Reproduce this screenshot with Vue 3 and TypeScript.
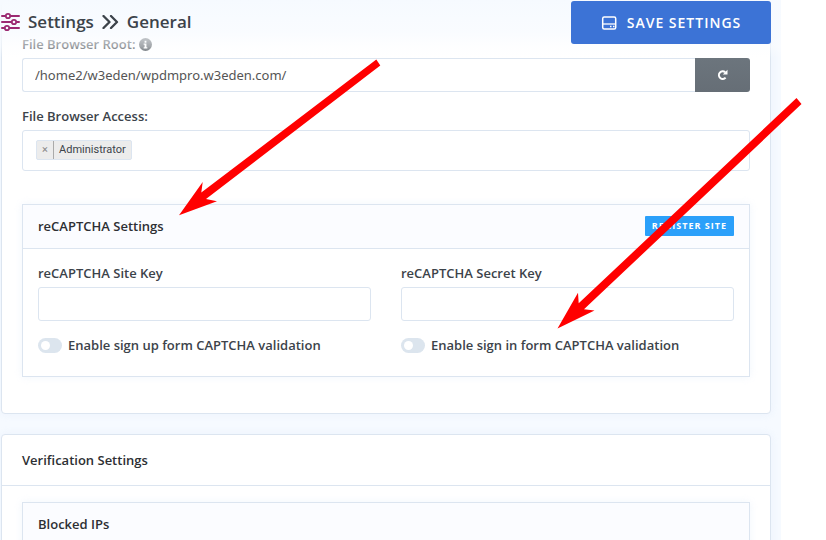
<script setup lang="ts">
import { ref } from 'vue'

const rootPath = ref<string>('/home2/w3eden/wpdmpro.w3eden.com/')
const roles = ref<string[]>(['Administrator'])

interface CaptchaField {
  id: string
  label: string
  value: string
  toggleLabel: string
  enabled: boolean
}

const captchaFields = ref<CaptchaField[]>([
  { id: 'site-key', label: 'reCAPTCHA Site Key', value: '', toggleLabel: 'Enable sign up form CAPTCHA validation', enabled: false },
  { id: 'secret-key', label: 'reCAPTCHA Secret Key', value: '', toggleLabel: 'Enable sign in form CAPTCHA validation', enabled: false },
])

function removeRole(role: string): void {
  roles.value = roles.value.filter((r) => r !== role)
}
</script>

<template>
  <div class="page">
    <header class="topbar">
      <h1 class="title">
        <svg class="sliders" viewBox="0 0 20 20" width="20" height="20" aria-hidden="true">
          <g fill="none" stroke="#9b2a72" stroke-width="2" stroke-linecap="round">
            <path d="M2 4h3M11 4h8M2 10h9M17 10h2M2 16h2M10 16h9" />
            <circle cx="8" cy="4" r="2.200" stroke-width="1.800" />
            <circle cx="14" cy="10" r="2.200" stroke-width="1.800" />
            <circle cx="7" cy="16" r="2.200" stroke-width="1.800" />
          </g>
        </svg>
        <span>Settings</span>
        <svg class="chevrons" viewBox="0 0 17 14" width="17" height="14" aria-hidden="true">
          <path d="M1.500 1l6 6-6 6M9 1l6 6-6 6" fill="none" stroke="#3c434a" stroke-width="2.300" stroke-linecap="round" stroke-linejoin="round" />
        </svg>
        <span>General</span>
      </h1>
      <button type="button" class="save">
        <svg viewBox="0 0 16 14" width="16" height="14" aria-hidden="true">
          <rect x="1.700" y="1" width="13" height="12" rx="1.500" fill="none" stroke="#fff" stroke-width="1.500" />
          <path d="M2 8h13" stroke="#fff" stroke-width="1.300" />
          <path d="M9 10.500h1.500M12 10.500h1.500" stroke="#fff" stroke-width="1.400" />
        </svg>
        Save Settings
      </button>
    </header>

    <main class="content">
      <section class="card files">
        <label class="label" for="root">
          File Browser Root:
          <svg viewBox="0 0 14 14" width="13" height="13" aria-hidden="true">
            <circle cx="7" cy="7" r="7" fill="#495057" />
            <path d="M6 3h2v2H6zM5 6h3v4h1v1.300H5V10h1V7.300H5z" fill="#fff" />
          </svg>
        </label>
        <div class="input-group">
          <input id="root" v-model="rootPath" class="input" type="text" />
          <button type="button" class="reset" aria-label="Reset">
            <svg viewBox="0 0 12 12" width="12" height="12" aria-hidden="true">
              <path d="M8.600 8.600A3.800 3.800 0 1 1 8.200 3.200" fill="none" stroke="#fff" stroke-width="2" />
              <path d="M10.500 .700V5.400H5.800z" fill="#fff" />
            </svg>
          </button>
        </div>

        <label class="label access" for="roles">File Browser Access:</label>
        <div class="chosen">
          <span v-for="role in roles" :key="role" class="chip">
            <button type="button" class="remove" :aria-label="'Remove ' + role" @click="removeRole(role)">×</button>
            <span class="role">{{ role }}</span>
          </span>
          <input id="roles" class="search" type="text" />
        </div>

        <section class="panel captcha">
          <div class="panel-head">
            <h2 class="heading">reCAPTCHA Settings</h2>
            <a class="register" href="#">Register Site</a>
          </div>
          <div class="columns">
            <div v-for="field in captchaFields" :key="field.id" class="column">
              <label class="label" :for="field.id">{{ field.label }}</label>
              <input :id="field.id" v-model="field.value" class="input" type="text" />
              <label class="label switch">
                <input v-model="field.enabled" type="checkbox" class="toggle" />
                {{ field.toggleLabel }}
              </label>
            </div>
          </div>
        </section>
      </section>

      <section class="card">
        <div class="card-head">
          <h2 class="heading">Verification Settings</h2>
        </div>
        <div class="card-body">
          <section class="panel">
            <div class="panel-head">
              <h3 class="heading">Blocked IPs</h3>
            </div>
          </section>
        </div>
      </section>
    </main>

    <svg class="arrows" viewBox="0 0 826 540" width="826" height="540" aria-hidden="true">
      <path fill="#f00" d="M376.300 59.500 380.300 65.500 206 199 217 201.300 179 215.300 202.700 182 201.300 192.500Z" />
      <path fill="#f00" d="M796.500 98 801.500 104 584 309.300 594.500 310.500 557.500 328.500 578 292.700 578.700 303.300Z" />
    </svg>
  </div>
</template>

<style>
body {
  background: #fff;
}
</style>

<style scoped>
* {
  box-sizing: border-box;
}

.page {
  position: relative;
  height: 100vh;
  overflow: hidden;
  padding-right: 45px;
  font-family: 'Open Sans', 'Noto Sans', sans-serif;
  font-size: 13px;
  line-height: 20px;
  color: #3c434a;
}

.topbar {
  position: absolute;
  z-index: 1;
  top: 0;
  left: 0;
  right: 45px;
  display: flex;
  justify-content: space-between;
  align-items: flex-start;
  padding: 1px 10px 14px 0;
  background: linear-gradient(to bottom, #f6faff 0, #f8fbffd0 55%, #fcfdff80 80%, #ffffff00 100%);
}

.title {
  display: flex;
  align-items: center;
  gap: 8px;
  height: 42px;
  margin: 0;
  font-size: 17px;
  font-weight: 600;
}

.save {
  display: flex;
  align-items: center;
  justify-content: center;
  gap: 10px;
  width: 200px;
  height: 43px;
  border: 0;
  border-radius: 3px;
  background: #3c73d6;
  color: #fff;
  font: inherit;
  font-size: 14px;
  font-weight: 600;
  letter-spacing: 1px;
  text-transform: uppercase;
}

.content {
  display: flex;
  flex-direction: column;
  gap: 20px;
  min-height: 100%;
  padding: 0 10px 0 1px;
  background: #f6faff;
}

.card {
  border: 1px solid #dce5f0;
  border-radius: 4px;
  background: #fff;
  box-shadow: 0 0 8px #dde8f866;
}

.files {
  padding: 33px 20px 36px;
}

.label {
  display: flex;
  align-items: center;
  gap: 4px;
  margin-bottom: 4px;
  font-weight: 600;
}

.input-group {
  display: flex;
}

.input {
  display: block;
  width: 100%;
  min-width: 0;
  height: 34px;
  padding: 0 12px;
  border: 1px solid #dce5f0;
  border-radius: 3px;
  background: #fff;
  color: #555;
  font: inherit;
  font-family: 'Noto Sans', 'Open Sans', sans-serif;
}

.input-group .input {
  flex: 1;
  border-right: 0;
  border-radius: 3px 0 0 3px;
}

.reset {
  display: flex;
  align-items: center;
  justify-content: center;
  width: 55px;
  height: 34px;
  padding: 0;
  border: 0;
  border-radius: 0 3px 3px 0;
  background: linear-gradient(#6c757d, #666e76);
}

.access {
  margin-top: 14px;
}

.chosen {
  display: flex;
  align-items: center;
  height: 41px;
  padding: 0 13px 2px;
  border: 1px solid #dce5f0;
  border-radius: 3px;
}

.chip {
  display: flex;
  align-items: stretch;
  height: 20px;
  border: 1px solid #dce5f0;
  border-radius: 2px;
  background: #ececec;
  font-family: Roboto, 'Open Sans', sans-serif;
  font-size: 11px;
  line-height: 18px;
}

.remove {
  width: 17px;
  padding: 0;
  border: 0;
  border-right: 1px solid #aaa;
  background: none;
  color: #888;
  font: inherit;
}

.role {
  padding: 0 5px;
}

.search {
  flex: 1;
  min-width: 0;
  border: 0;
  outline: 0;
  background: none;
  font: inherit;
}

.panel {
  border: 1px solid #dce5f0;
  box-shadow: 0 0 8px #dde8f866;
}

.captcha {
  margin-top: 33px;
}

.panel-head {
  display: flex;
  align-items: center;
  justify-content: space-between;
  height: 44px;
  padding: 0 15px 2px;
  border-bottom: 1px solid #dce5f0;
  background: #fbfcff;
}

.heading {
  margin: 0;
  color: #2d2f33;
  font-size: 13px;
  font-weight: 600;
}

.register {
  padding: 0 7px;
  border-radius: 1px;
  background: #2ba0fa;
  color: #fff;
  font-size: 9px;
  font-weight: 700;
  letter-spacing: 1px;
  text-decoration: none;
  text-transform: uppercase;
}

.columns {
  display: grid;
  grid-template-columns: 1fr 1fr;
  gap: 30px;
  padding: 14px 15px 21px;
}

.switch {
  gap: 6px;
  margin: 14px 0 0;
}

.toggle {
  display: flex;
  align-items: center;
  flex: none;
  width: 24px;
  height: 15px;
  margin: 0;
  padding: 0 3px;
  appearance: none;
  border-radius: 8px;
  background: #dce5ee;
}

.toggle::before {
  content: '';
  width: 9px;
  height: 9px;
  border-radius: 50%;
  background: #fff;
}

.toggle:checked {
  justify-content: flex-end;
  background: #3c73d6;
}

.card-head {
  display: flex;
  align-items: center;
  height: 51px;
  padding: 0 20px;
  border-bottom: 1px solid #dce5f0;
}

.card-body {
  padding: 16px 20px 20px;
}

.arrows {
  position: absolute;
  z-index: 2;
  top: 0;
  left: 0;
  pointer-events: none;
}
</style>
